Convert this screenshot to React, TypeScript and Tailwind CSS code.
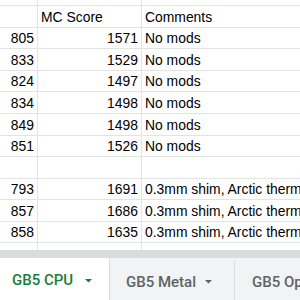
import React from "react";

type Row = { a: string; b: string; c: string; h: string };

const rows: Row[] = [
  { a: "", b: "", c: "", h: "h-[6px]" },
  { a: "", b: "MC Score", c: "Comments", h: "h-[22px]" },
  { a: "805", b: "1571", c: "No mods", h: "h-[21px]" },
  { a: "833", b: "1529", c: "No mods", h: "h-[22px]" },
  { a: "824", b: "1497", c: "No mods", h: "h-[21px]" },
  { a: "834", b: "1498", c: "No mods", h: "h-[22px]" },
  { a: "849", b: "1498", c: "No mods", h: "h-[22px]" },
  { a: "851", b: "1526", c: "No mods", h: "h-[21px]" },
  { a: "", b: "", c: "", h: "h-[22px]" },
  { a: "793", b: "1691", c: "0.3mm shim, Arctic therm", h: "h-[21px]" },
  { a: "857", b: "1686", c: "0.3mm shim, Arctic therm", h: "h-[22px]" },
  { a: "858", b: "1635", c: "0.3mm shim, Arctic therm", h: "h-[21px]" },
];

function Caret({ color }: { color: string }) {
  return (
    <svg width="7" height="4" viewBox="0 0 7 4" className="shrink-0">
      <path d="M0 0 L7 0 L3.5 3.5 Z" fill={color} />
    </svg>
  );
}

export default function App() {
  return (
    <div
      className="w-[300px] h-[300px] overflow-hidden bg-white flex flex-col"
      style={{ fontFamily: '"Liberation Sans", Arial, sans-serif' }}
    >
      <div className="flex flex-col text-[13.9px] text-[#000]">
        {rows.map((r, i) => (
          <div key={i} className={`flex ${r.h} border-b border-[#e2e3e3]`}>
            <div className="w-[38px] shrink-0 border-r border-[#e2e3e3] flex items-end justify-end pr-[3px] pb-[2px] leading-[16px] overflow-hidden">
              {r.a}
            </div>
            <div className="w-[104px] shrink-0 border-r border-[#e2e3e3] flex items-end pb-[2px] leading-[16px] overflow-hidden">
              <span className={`w-full whitespace-nowrap ${i === 1 ? "text-left pl-[3px]" : "text-right pr-[3px]"}`}>
                {r.b}
              </span>
            </div>
            <div className="flex-1 min-w-0 flex items-end pl-[3px] pb-[2px] leading-[16px] whitespace-nowrap overflow-hidden">
              {r.c}
            </div>
          </div>
        ))}
        <div className="flex h-[7px]">
          <div className="w-[38px] shrink-0 border-r border-[#e2e3e3]" />
          <div className="w-[104px] shrink-0 border-r border-[#e2e3e3]" />
          <div className="flex-1" />
        </div>
      </div>
      <div className="h-[8px] bg-[#dadce0] shrink-0" />
      <div
        className="flex-1 flex bg-[#f1f3f4] text-[15px] font-medium"
        style={{ fontFamily: 'Roboto, "Noto Sans", sans-serif' }}
      >
        <div className="w-[110px] shrink-0 bg-white flex items-center pt-[3px] pl-[12px] gap-[12px] text-[#188038] border-r border-[#dadce0]">
          <span>GB5 CPU</span>
          <Caret color="#188038" />
        </div>
        <div className="w-[125px] shrink-0 flex items-center pt-[3px] pl-[16px] gap-[9px] text-[#5f6368] border-r border-[#dadce0] mt-[3px]">
          <span>GB5 Metal</span>
          <Caret color="#5f6368" />
        </div>
        <div className="flex-1 min-w-0 flex items-center pt-[6px] pl-[17px] text-[#5f6368] whitespace-nowrap overflow-hidden">
          <span>GB5 Op</span>
        </div>
      </div>
    </div>
  );
}
